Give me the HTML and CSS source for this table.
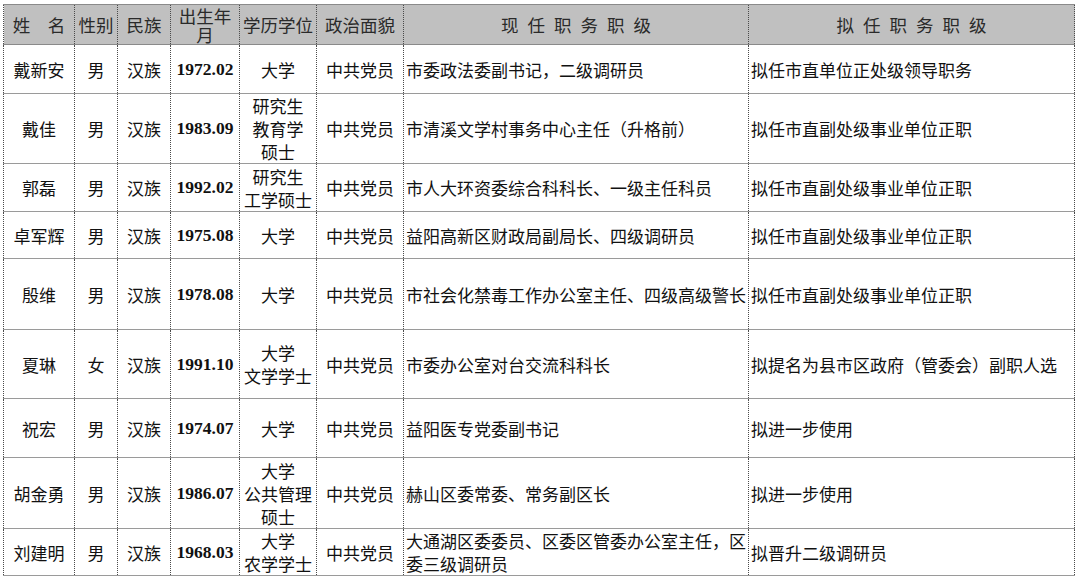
FILE: index.html
```html
<!DOCTYPE html>
<html lang="zh-CN">
<head>
<meta charset="utf-8">
<title>干部任前公示</title>
<link rel="stylesheet" href="styles.css">
</head>
<body>
<div class="page">
<table class="roster">
  <colgroup>
    <col class="c-name"><col class="c-sex"><col class="c-eth"><col class="c-birth"><col class="c-edu"><col class="c-party"><col class="c-now"><col class="c-next">
  </colgroup>
  <thead>
    <tr class="r-head">
      <th>姓　名</th>
      <th>性别</th>
      <th>民族</th>
      <th>出生年月</th>
      <th>学历学位</th>
      <th>政治面貌</th>
      <th class="spaced">现任职务职级</th>
      <th class="spaced">拟任职务职级</th>
    </tr>
  </thead>
  <tbody>
    <tr class="r1">
      <td>戴新安</td><td>男</td><td>汉族</td><td class="num">1972.02</td><td>大学</td><td>中共党员</td>
      <td class="left">市委政法委副书记，二级调研员</td><td class="left">拟任市直单位正处级领导职务</td>
    </tr>
    <tr class="r2">
      <td>戴佳</td><td>男</td><td>汉族</td><td class="num">1983.09</td><td>研究生<br>教育学<br>硕士</td><td>中共党员</td>
      <td class="left">市清溪文学村事务中心主任（升格前）</td><td class="left">拟任市直副处级事业单位正职</td>
    </tr>
    <tr class="r3">
      <td>郭磊</td><td>男</td><td>汉族</td><td class="num">1992.02</td><td>研究生<br>工学硕士</td><td>中共党员</td>
      <td class="left">市人大环资委综合科科长、一级主任科员</td><td class="left">拟任市直副处级事业单位正职</td>
    </tr>
    <tr class="r4">
      <td>卓军辉</td><td>男</td><td>汉族</td><td class="num">1975.08</td><td>大学</td><td>中共党员</td>
      <td class="left">益阳高新区财政局副局长、四级调研员</td><td class="left">拟任市直副处级事业单位正职</td>
    </tr>
    <tr class="r5">
      <td>殷维</td><td>男</td><td>汉族</td><td class="num">1978.08</td><td>大学</td><td>中共党员</td>
      <td class="left">市社会化禁毒工作办公室主任、四级高级警长</td><td class="left">拟任市直副处级事业单位正职</td>
    </tr>
    <tr class="r6">
      <td>夏琳</td><td>女</td><td>汉族</td><td class="num">1991.10</td><td>大学<br>文学学士</td><td>中共党员</td>
      <td class="left">市委办公室对台交流科科长</td><td class="left">拟提名为县市区政府（管委会）副职人选</td>
    </tr>
    <tr class="r7">
      <td>祝宏</td><td>男</td><td>汉族</td><td class="num">1974.07</td><td>大学</td><td>中共党员</td>
      <td class="left">益阳医专党委副书记</td><td class="left">拟进一步使用</td>
    </tr>
    <tr class="r8">
      <td>胡金勇</td><td>男</td><td>汉族</td><td class="num">1986.07</td><td>大学<br>公共管理<br>硕士</td><td>中共党员</td>
      <td class="left">赫山区委常委、常务副区长</td><td class="left">拟进一步使用</td>
    </tr>
    <tr class="r9">
      <td>刘建明</td><td>男</td><td>汉族</td><td class="num">1968.03</td><td>大学<br>农学学士</td><td>中共党员</td>
      <td class="left">大通湖区委委员、区委区管委办公室主任，区委三级调研员</td><td class="left">拟晋升二级调研员</td>
    </tr>
  </tbody>
</table>
</div>
</body>
</html>
```
FILE: styles.css
```css
html, body {
  margin: 0;
  padding: 0;
  background: #ffffff;
}

.page {
  padding: 4px 0 0 3px;
}

.roster {
  border-collapse: collapse;
  table-layout: fixed;
  width: 1071px;
  font-family: "Noto Sans CJK SC", "Noto Sans", sans-serif;
  font-size: 17px;
  line-height: 23px;
  color: #111111;
}

.c-name { width: 71px; }
.c-sex { width: 43px; }
.c-eth { width: 53px; }
.c-birth { width: 69px; }
.c-edu { width: 77px; }
.c-party { width: 87px; }
.c-now { width: 345px; }
.c-next { width: 326px; }

.roster th,
.roster td {
  padding: 0;
  text-align: center;
  vertical-align: middle;
  border-left: 1px dotted #4a4a4a;
  border-right: 1px dotted #4a4a4a;
  border-top: 1px solid #9a9a9a;
  border-bottom: 1px solid #9a9a9a;
}

.roster th {
  padding: 0 2px;
  background: #c0c0c0;
  font-weight: 400;
  font-size: 17.5px;
  color: #2a2a2a;
  line-height: 19px;
  border-top: 1px solid #8a8a8a;
  border-bottom: 1px solid #8a8a8a;
}

.roster th.spaced {
  letter-spacing: 9px;
  text-indent: 9px;
}

.roster td.left {
  text-align: left;
  padding-left: 2px;
}

.roster td.num {
  font-family: "Liberation Serif", "Times New Roman", serif;
  font-weight: 700;
  font-size: 17.5px;
}

.r-head { height: 40px; }
.r1 { height: 49px; }
.r2 { height: 70px; }
.r3 { height: 48px; }
.r4 { height: 47px; }
.r5 { height: 71px; }
.r6 { height: 69px; }
.r7 { height: 59px; }
.r8 { height: 71px; }
.r9 { height: 47px; }
```
